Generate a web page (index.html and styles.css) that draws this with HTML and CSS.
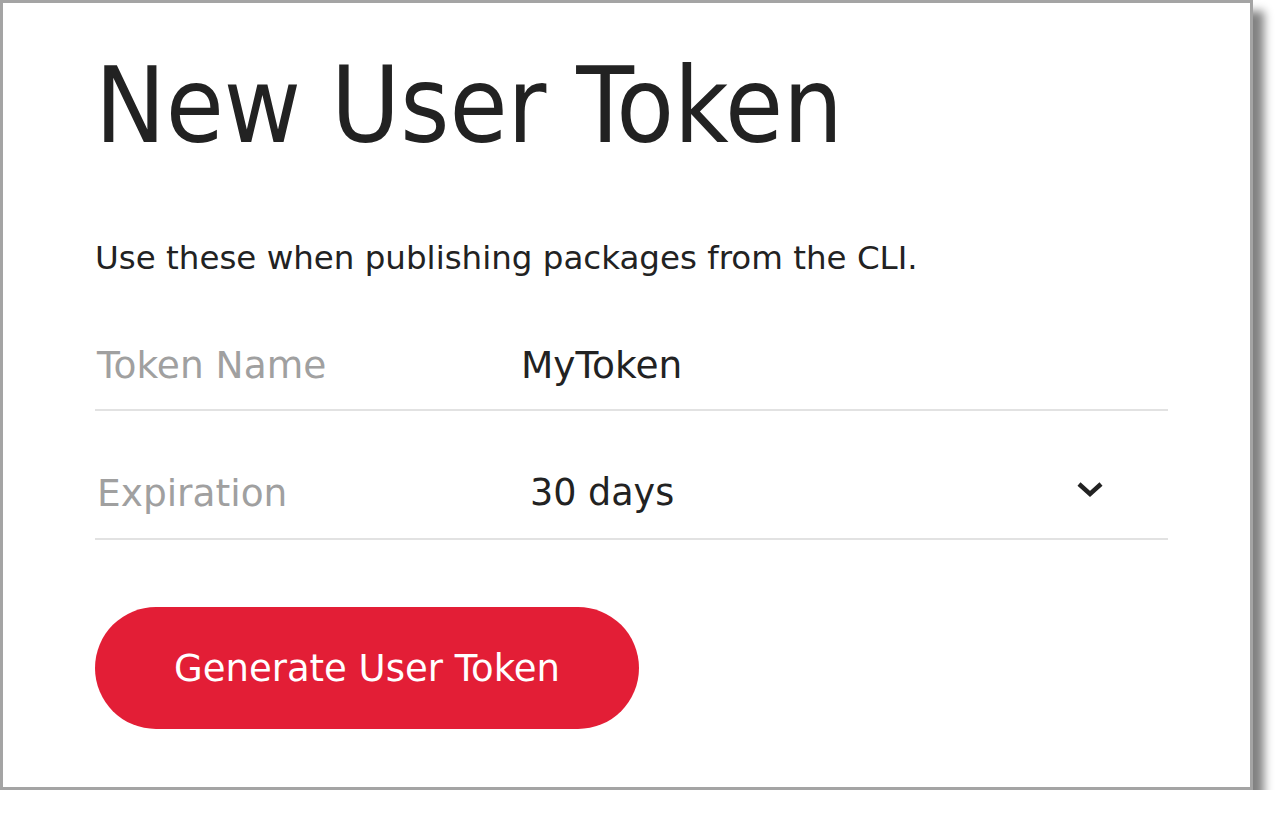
FILE: index.html
```html
<!DOCTYPE html>
<html lang="en">
<head>
    <meta charset="UTF-8">
    <title>New User Token</title>
    <link rel="stylesheet" href="styles.css">
</head>
<body>
<div class="card">
    <h1 class="title">New User Token</h1>
    <p class="intro">Use these when publishing packages from the CLI.</p>
    <form class="token-form">
        <div class="field field-name">
            <label class="label">Token Name</label>
            <span class="value">MyToken</span>
        </div>
        <div class="field field-expire">
            <label class="label">Expiration</label>
            <span class="value select">30 days</span>
            <svg class="chevron" width="30" height="20" viewBox="0 0 30 20">
                <path d="M4 5 L15 15 L26 5" fill="none" stroke="#222" stroke-width="4.5"/>
            </svg>
        </div>
        <button type="button" class="btn">Generate User Token</button>
    </form>
</div>
</body>
</html>
```

FILE: styles.css
```css
*{
    margin: 0;
    padding: 0;
    box-sizing: border-box;
}
body{
    background: #fff;
    font-family: "DejaVu Sans", sans-serif;
    color: #222;
}
.card{
    width: 1253px;
    height: 790px;
    border: 3px solid #a4a4a4;
    background: #fff;
    box-shadow: 11px 11px 9px #828282;
    padding: 43px 82px 0 92px;
}
.title{
    font-family: "DejaVu Sans Condensed", "DejaVu Sans", sans-serif;
    font-weight: normal;
    font-size: 105px;
    line-height: 120px;
    color: #222;
}
.intro{
    margin-top: 72px;
    font-size: 32.5px;
    line-height: 40px;
}
.field{
    display: flex;
    align-items: center;
    border-bottom: 2px solid #e2e2e2;
}
.field-name{
    padding: 64px 0 21px;
}
.field-expire{
    padding: 59px 0 22px;
}
.label{
    width: 426px;
    font-size: 37.5px;
    line-height: 46px;
    color: #a0a0a0;
    padding-left: 2px;
}
.value{
    font-size: 37.5px;
    line-height: 46px;
    color: #222;
}
.select{
    padding-left: 9px;
    flex: 1;
    font-size: 36.5px;
}
.chevron{
    margin: 0 63px 8px 0;
}
.btn{
    display: block;
    margin-top: 67px;
    width: 544px;
    height: 122px;
    border: none;
    border-radius: 61px;
    background: #e31e36;
    color: #fff;
    font-family: inherit;
    font-size: 37px;
}
```
